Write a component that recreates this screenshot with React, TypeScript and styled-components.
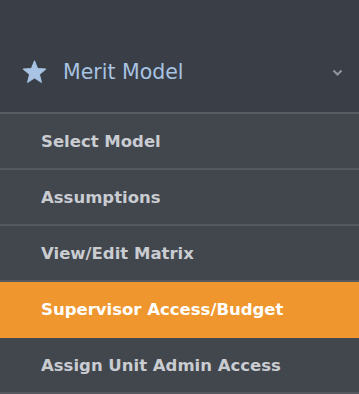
import React from "react";
import styled, { createGlobalStyle } from "styled-components";

const GlobalStyle = createGlobalStyle`
  html, body {
    margin: 0;
    padding: 0;
    background: #3a3e46;
  }
  body {
    font-family: "DejaVu Sans", Verdana, sans-serif;
  }
`;

const SRoot = styled.nav`
  width: 359px;
  height: 394px;
  overflow: hidden;
  background: #3a3e46;
`;

const SHeader = styled.div`
  height: 114px;
  display: flex;
  align-items: center;
  padding: 32px 16px 0 22px;
  box-sizing: border-box;
  border-bottom: 2px solid #575b62;
  color: #a8c3e3;
  font-size: 20.5px;
`;

const SStar = styled.svg`
  width: 25px;
  height: 24px;
  margin-right: 16px;
  flex-shrink: 0;
`;

const STitle = styled.span`
  flex: 1;
`;

const SChevron = styled.svg`
  width: 11px;
  height: 8px;
  margin-top: 2px;
`;

const SList = styled.ul`
  list-style: none;
  margin: 0;
  padding: 0;
`;

const SItem = styled.li<{ $active?: boolean }>`
  height: 56px;
  display: flex;
  align-items: center;
  padding-left: 41px;
  box-sizing: border-box;
  font-size: 16.5px;
  font-weight: bold;
  color: ${(p) => (p.$active ? "#ffffff" : "#c9ccd1")};
  background: ${(p) => (p.$active ? "#ef972e" : "#42464d")};
  border-bottom: 2px solid ${(p) => (p.$active ? "#ef972e" : "#55595f")};
`;

const items = [
  "Select Model",
  "Assumptions",
  "View/Edit Matrix",
  "Supervisor Access/Budget",
  "Assign Unit Admin Access",
];

const App = () => {
  return (
    <SRoot>
      <GlobalStyle />
      <SHeader>
        <SStar viewBox="0 0 24 23">
          <path
            d="M12 1 L14.9 8.2 L22.7 8.7 L16.7 13.7 L18.6 21.3 L12 17.1 L5.4 21.3 L7.3 13.7 L1.3 8.7 L9.1 8.2 Z"
            fill="#a8c3e3"
            strokeLinejoin="round"
            stroke="#a8c3e3"
            strokeWidth="1"
          />
        </SStar>
        <STitle>Merit Model</STitle>
        <SChevron viewBox="0 0 11 8">
          <path d="M1.5 1.5 L5.5 5.5 L9.5 1.5" fill="none" stroke="#8e949c" strokeWidth="2.2" />
        </SChevron>
      </SHeader>
      <SList>
        {items.map((label, i) => (
          <SItem key={label} $active={i === 3}>
            {label}
          </SItem>
        ))}
      </SList>
    </SRoot>
  );
};

export default App;
